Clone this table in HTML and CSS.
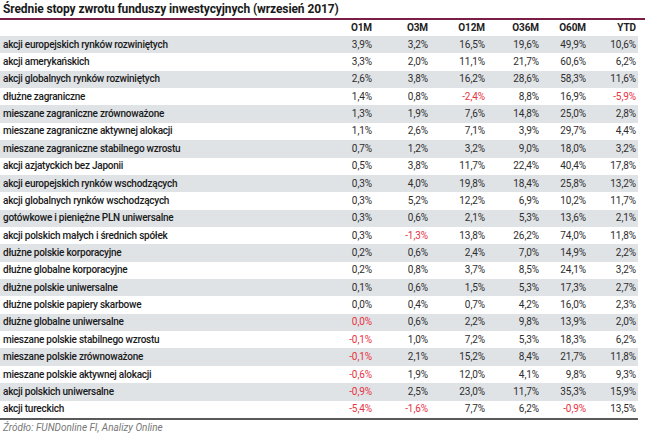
FILE: index.html
```html
<!DOCTYPE html>
<html lang="pl">
<head>
<meta charset="utf-8">
<title>Średnie stopy zwrotu funduszy</title>
<link rel="stylesheet" href="styles.css">
</head>
<body>
<div class="wrap">
  <h1 class="title">Średnie stopy zwrotu funduszy inwestycyjnych (wrzesień 2017)</h1>
  <div class="tbl" role="table">
    <div class="row head"><span></span><span>O1M</span><span>O3M</span><span>O12M</span><span>O36M</span><span>O60M</span><span>YTD</span></div>
    <div class="row"><span>akcji europejskich rynków rozwiniętych</span><span>3,9%</span><span>3,2%</span><span>16,5%</span><span>19,6%</span><span>49,9%</span><span>10,6%</span></div>
    <div class="row"><span>akcji amerykańskich</span><span>3,3%</span><span>2,0%</span><span>11,1%</span><span>21,7%</span><span>60,6%</span><span>6,2%</span></div>
    <div class="row"><span>akcji globalnych rynków rozwiniętych</span><span>2,6%</span><span>3,8%</span><span>16,2%</span><span>28,6%</span><span>58,3%</span><span>11,6%</span></div>
    <div class="row"><span>dłużne zagraniczne</span><span>1,4%</span><span>0,8%</span><span class="neg">-2,4%</span><span>8,8%</span><span>16,9%</span><span class="neg">-5,9%</span></div>
    <div class="row"><span>mieszane zagraniczne zrównoważone</span><span>1,3%</span><span>1,9%</span><span>7,6%</span><span>14,8%</span><span>25,0%</span><span>2,8%</span></div>
    <div class="row"><span>mieszane zagraniczne aktywnej alokacji</span><span>1,1%</span><span>2,6%</span><span>7,1%</span><span>3,9%</span><span>29,7%</span><span>4,4%</span></div>
    <div class="row"><span>mieszane zagraniczne stabilnego wzrostu</span><span>0,7%</span><span>1,2%</span><span>3,2%</span><span>9,0%</span><span>18,0%</span><span>3,2%</span></div>
    <div class="row"><span>akcji azjatyckich bez Japonii</span><span>0,5%</span><span>3,8%</span><span>11,7%</span><span>22,4%</span><span>40,4%</span><span>17,8%</span></div>
    <div class="row"><span>akcji europejskich rynków wschodzących</span><span>0,3%</span><span>4,0%</span><span>19,8%</span><span>18,4%</span><span>25,8%</span><span>13,2%</span></div>
    <div class="row"><span>akcji globalnych rynków wschodzących</span><span>0,3%</span><span>5,2%</span><span>12,2%</span><span>6,9%</span><span>10,2%</span><span>11,7%</span></div>
    <div class="row"><span>gotówkowe i pieniężne PLN uniwersalne</span><span>0,3%</span><span>0,6%</span><span>2,1%</span><span>5,3%</span><span>13,6%</span><span>2,1%</span></div>
    <div class="row"><span>akcji polskich małych i średnich spółek</span><span>0,3%</span><span class="neg">-1,3%</span><span>13,8%</span><span>26,2%</span><span>74,0%</span><span>11,8%</span></div>
    <div class="row"><span>dłużne polskie korporacyjne</span><span>0,2%</span><span>0,6%</span><span>2,4%</span><span>7,0%</span><span>14,9%</span><span>2,2%</span></div>
    <div class="row"><span>dłużne globalne korporacyjne</span><span>0,2%</span><span>0,8%</span><span>3,7%</span><span>8,5%</span><span>24,1%</span><span>3,2%</span></div>
    <div class="row"><span>dłużne polskie uniwersalne</span><span>0,1%</span><span>0,6%</span><span>1,5%</span><span>5,3%</span><span>17,3%</span><span>2,7%</span></div>
    <div class="row"><span>dłużne polskie papiery skarbowe</span><span>0,0%</span><span>0,4%</span><span>0,7%</span><span>4,2%</span><span>16,0%</span><span>2,3%</span></div>
    <div class="row"><span>dłużne globalne uniwersalne</span><span class="neg">0,0%</span><span>0,6%</span><span>2,2%</span><span>9,8%</span><span>13,9%</span><span>2,0%</span></div>
    <div class="row"><span>mieszane polskie stabilnego wzrostu</span><span class="neg">-0,1%</span><span>1,0%</span><span>7,2%</span><span>5,3%</span><span>18,3%</span><span>6,2%</span></div>
    <div class="row"><span>mieszane polskie zrównoważone</span><span class="neg">-0,1%</span><span>2,1%</span><span>15,2%</span><span>8,4%</span><span>21,7%</span><span>11,8%</span></div>
    <div class="row"><span>mieszane polskie aktywnej alokacji</span><span class="neg">-0,6%</span><span>1,9%</span><span>12,0%</span><span>4,1%</span><span>9,8%</span><span>9,3%</span></div>
    <div class="row"><span>akcji polskich uniwersalne</span><span class="neg">-0,9%</span><span>2,5%</span><span>23,0%</span><span>11,7%</span><span>35,3%</span><span>15,9%</span></div>
    <div class="row"><span>akcji tureckich</span><span class="neg">-5,4%</span><span class="neg">-1,6%</span><span>7,7%</span><span>6,2%</span><span class="neg">-0,9%</span><span>13,5%</span></div>
  </div>
  <p class="source">Źródło: FUNDonline FI, Analizy Online</p>
</div>
</body>
</html>
```

FILE: styles.css
```css
html, body {
  margin: 0;
  padding: 0;
  background: #ffffff;
}
body {
  font-family: Roboto, "Liberation Sans", sans-serif;
  color: #1f1f1f;
}
.wrap {
  width: 645px;
}
.title {
  margin: 0;
  font-size: 12px;
  font-weight: 700;
  line-height: 18px;
  height: 18px;
  padding-left: 3px;
  border-bottom: 2px solid #7a1e48;
  color: #1a1a1a;
  letter-spacing: -0.1px;
}
.tbl {
  width: 638px;
  font-size: 10px;
  border-bottom: 2px solid #5a5a5a;
}
.row {
  display: grid;
  grid-template-columns: 318px 56px 56px 57px 54px 47px 50px;
  align-items: center;
  height: 17.36px;
  color: #2e2e2e;
  letter-spacing: -0.1px;
}
.row > span {
  text-align: right;
  padding-right: 2px;
  line-height: 12px;
  white-space: nowrap;
}
.row > span:first-child {
  text-align: left;
  padding-left: 3px;
  font-weight: 500;
  color: #1a1a1a;
  letter-spacing: -0.25px;
}
.row.head {
  height: 16px;
  font-weight: 700;
  color: #222;
}
.tbl .row:nth-child(even) {
  background: #dfe3e6;
}
.row > span.neg {
  color: #e8323f;
}
.source {
  margin: 2px 0 0 3px;
  font-size: 10px;
  font-style: italic;
  color: #777;
  line-height: 11px;
}
```
